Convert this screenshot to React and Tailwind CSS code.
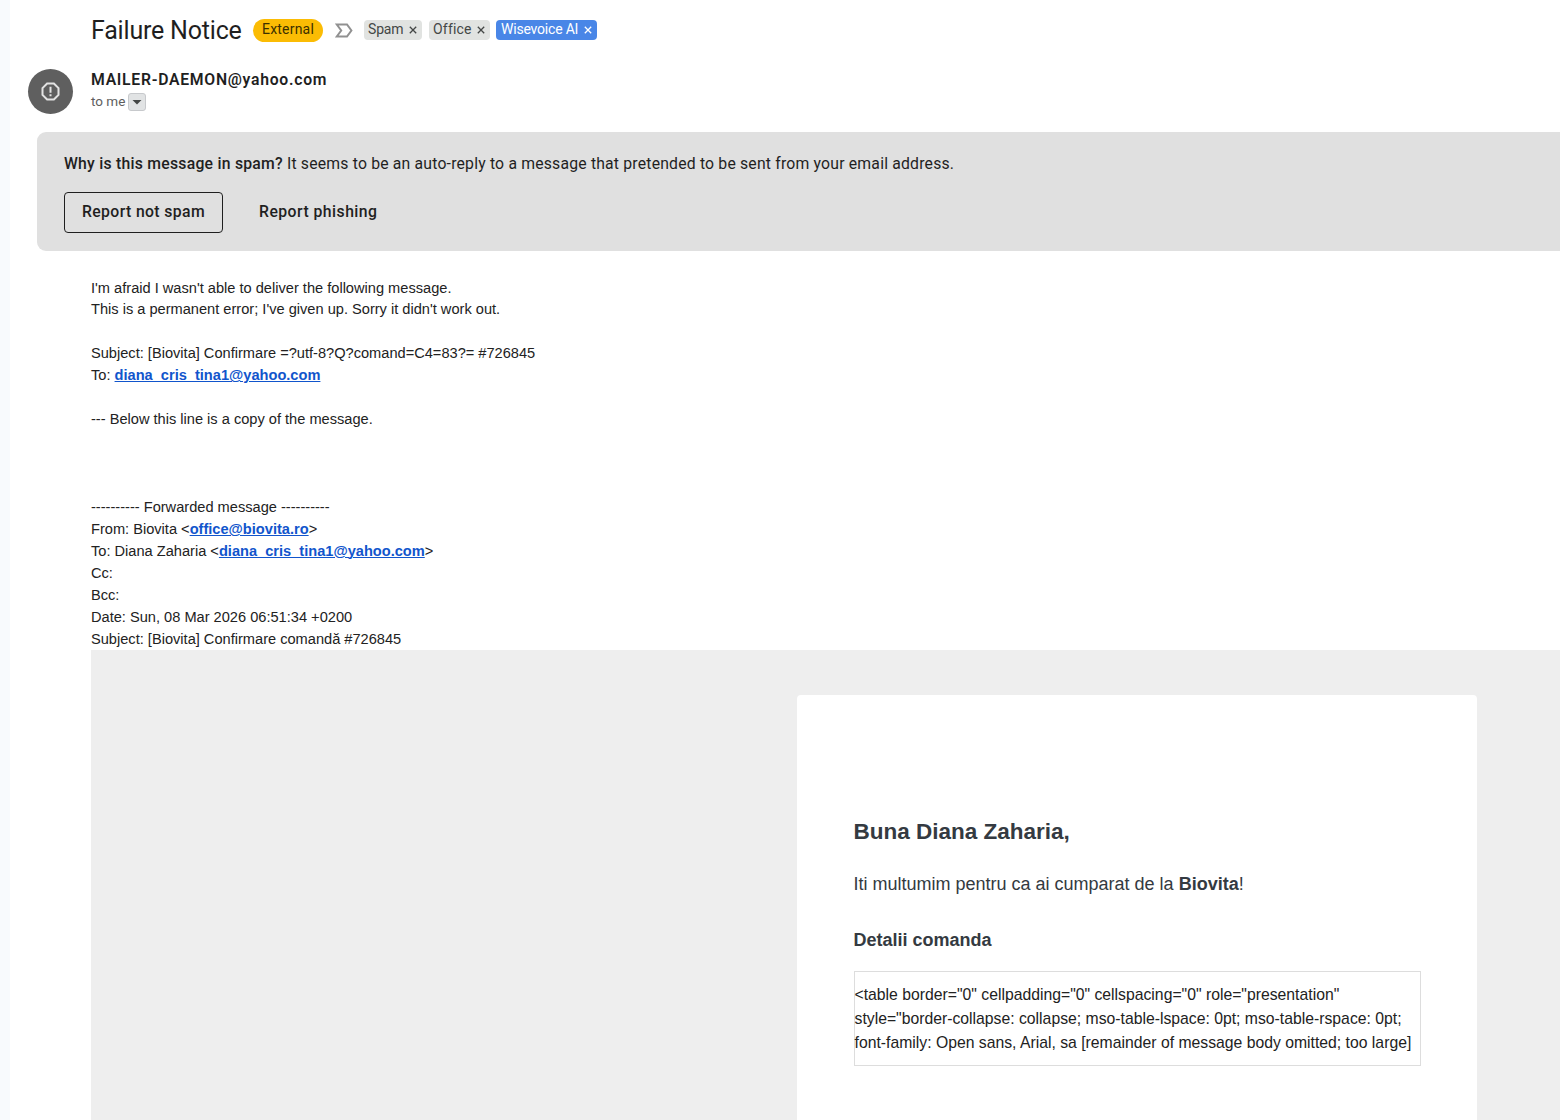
import React from "react";

function Chip({ className, children }) {
  return (
    <span className={"flex h-5 items-center rounded-[4px] text-[14px] leading-5 whitespace-nowrap " + className}>
      {children}
      <svg width="8" height="8" viewBox="0 0 8 8" className="ml-auto shrink-0" fill="none" stroke="currentColor" strokeWidth="1.3">
        <path d="M0.8 0.8 7.2 7.2M7.2 0.8 0.8 7.2" />
      </svg>
    </span>
  );
}

function Mail({ children }) {
  return <a className="font-bold text-[#1155cc] underline decoration-1 underline-offset-[1px]">{children}</a>;
}

function Header() {
  return (
    <header>
      <div className="flex h-[60px] items-center pl-[91px]">
        <h1 className="w-[162px] pt-[2px] text-[25px] leading-8 tracking-[-0.19px] whitespace-nowrap text-[#1f1f1f]"><span>Failure Notice</span></h1>
        <span className="flex h-[23px] w-[70px] items-center justify-center rounded-full bg-[#fbbc04] pb-px text-[14px] tracking-[0.2px] text-[#3c3000]"><span>External</span></span>
        <svg width="18" height="15" viewBox="0 0 18 15" className="ml-[12px]" fill="none" stroke="#919191" strokeWidth="2">
          <path d="M1.8 1.5H12L16.4 7.5 12 13.5H1.8L6.2 7.5Z" />
        </svg>
        <Chip className="ml-[11px] w-[58px] bg-[#e1e3e1] pr-[5px] pl-[4px] text-[#444746]"><span className="pb-[2px] tracking-[-0.15px]">Spam</span></Chip>
        <Chip className="ml-[7px] w-[61px] bg-[#e1e3e1] pr-[5px] pl-[4px] text-[#444746]"><span className="pb-[2px] tracking-[0.2px]">Office</span></Chip>
        <Chip className="ml-[6px] w-[101px] bg-[#4986e7] pr-[5px] pl-[5px] text-white"><span className="pb-[2px] tracking-[-0.2px]">Wisevoice AI</span></Chip>
      </div>
      <div className="flex h-[72px] pl-[28px]">
        <div className="mt-[9px] flex size-[45px] items-center justify-center rounded-full bg-[#5f5f5f]">
          <svg width="19" height="19" viewBox="0 0 19 19" fill="none" stroke="#e3e3e3" strokeWidth="2">
            <path d="M6.1 1.5H12.9L17.5 6.1V12.9L12.9 17.5H6.1L1.5 12.9V6.1Z" />
            <path d="M9.5 4.8V10.8M9.5 12.2V14.2" />
          </svg>
        </div>
        <div className="ml-[18px] pt-[9px]">
          <div className="text-[15.75px] leading-[22px] font-semibold tracking-[0.72px] text-[#1f1f1f]"><span>MAILER-DAEMON@yahoo.com</span></div>
          <div className="flex h-[20px] items-center text-[13.5px] text-[#5e5e5e]">
            <span className="w-[37px] whitespace-nowrap">to me</span>
            <span className="mt-px flex size-[18px] items-center justify-center rounded-[3px] border border-[#c7c9cc] bg-[#e1e3e4]">
              <svg width="10" height="5" viewBox="0 0 10 5" className="mt-px" fill="#444746"><path d="M0.5 0H9.5L5 4.6Z" /></svg>
            </span>
          </div>
        </div>
      </div>
    </header>
  );
}

function SpamBanner() {
  return (
    <section className="ml-[37px] h-[119px] rounded-l-[9px] bg-[#e0e0e0] pt-[20px] pl-[27px] text-[15.75px] text-[#1f1f1f]">
      <p className="leading-6 whitespace-nowrap"><b className="font-medium tracking-[0.25px]">Why is this message in spam?</b> <span className="tracking-[0.195px]">It seems to be an auto-reply to a message that pretended to be sent from your email address.</span></p>
      <div className="mt-4 flex">
        <button className="h-[41px] w-[159px] rounded-[4px] border border-[#1f1f1f] pb-[2px] font-medium tracking-[0.38px] whitespace-nowrap"><span>Report not spam</span></button>
        <button className="ml-[36px] h-[41px] pb-[2px] font-medium tracking-[0.47px] whitespace-nowrap"><span>Report phishing</span></button>
      </div>
    </section>
  );
}

function Body() {
  return (
    <article className="ml-[91px] flex grow flex-col pt-[26.5px] font-['Liberation_Sans',Arial,sans-serif] text-[14.625px] leading-[21.94px] text-[#222222]">
      <div className="h-[372.5px] whitespace-pre">
        <div>I'm afraid I wasn't able to deliver the following message.</div>
        <div>This is a permanent error; I've given up. Sorry it didn't work out.</div>
        <br />
        <div>Subject: [Biovita] Confirmare =?utf-8?Q?comand=C4=83?= #726845</div>
        <div>To: <Mail>diana_cris_tina1@yahoo.com</Mail></div>
        <br />
        <div>--- Below this line is a copy of the message.</div>
        <br />
        <br />
        <br />
        <div>---------- Forwarded message ----------</div>
        <div>From: Biovita &lt;<Mail>office@biovita.ro</Mail>&gt;</div>
        <div>To: Diana Zaharia &lt;<Mail>diana_cris_tina1@yahoo.com</Mail>&gt;</div>
        <div>Cc:</div>
        <div>Bcc:</div>
        <div>Date: Sun, 08 Mar 2026 06:51:34 +0200</div>
        <div>Subject: [Biovita] Confirmare comandă #726845</div>
      </div>
      <div className="flex grow bg-[#eeeeee] pt-[45px] pl-[706px]">
        <div className="w-[680px] rounded-t-[4px] bg-white px-[56.5px] pt-[121px] text-[#343a41]">
          <h2 className="text-[22.5px] leading-8 font-bold whitespace-nowrap"><span>Buna Diana Zaharia,</span></h2>
          <p className="mt-[23px] text-[18px] leading-[27px] whitespace-nowrap"><span>Iti multumim pentru ca ai cumparat de la </span><b>Biovita</b>!</p>
          <h3 className="mt-[29px] text-[18px] leading-[27px] font-bold whitespace-nowrap"><span>Detalii comanda</span></h3>
          <div className="mt-[17px] h-[95px] w-[567px] border border-[#dddddd] pt-[11px] text-[15.75px] leading-6 whitespace-pre text-[#222222]">
            <div><span>{'<table border="0" cellpadding="0" cellspacing="0" role="presentation"'}</span></div>
            <div><span>{'style="border-collapse: collapse; mso-table-lspace: 0pt; mso-table-rspace: 0pt;'}</span></div>
            <div><span>{"font-family: Open sans, Arial, sa [remainder of message body omitted; too large]"}</span></div>
          </div>
        </div>
      </div>
    </article>
  );
}

export default function App() {
  return (
    <div className="flex h-[1120px] w-[1560px] overflow-hidden font-['Roboto',sans-serif]">
      <main className="flex w-[1560px] shrink-0 flex-col bg-[linear-gradient(to_right,#f8fafd_10px,white_10px)]">
        <Header />
        <SpamBanner />
        <Body />
      </main>
    </div>
  );
}
